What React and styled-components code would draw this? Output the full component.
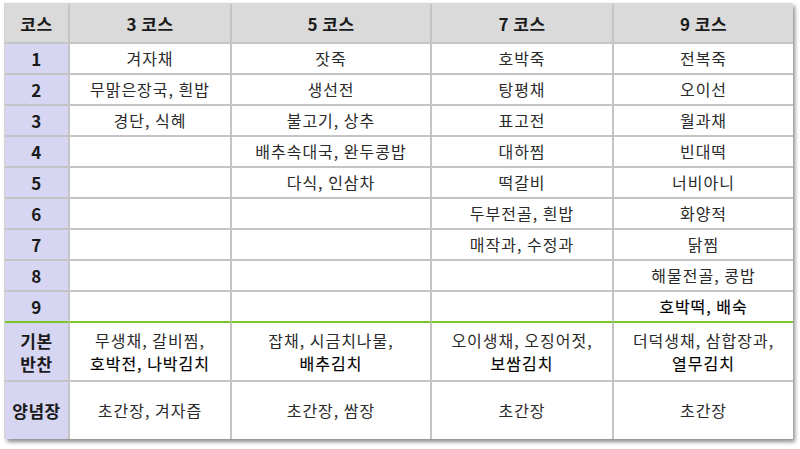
import React from "react";
import styled, { createGlobalStyle } from "styled-components";

const GlobalStyle = createGlobalStyle`
  html, body {
    margin: 0;
    padding: 0;
    background: #ffffff;
  }
  body {
    font-family: "Noto Sans CJK KR", "Noto Sans", sans-serif;
  }
`;

const Page = styled.div`
  width: 800px;
  height: 449px;
  padding: 3px 0 0 4px;
  box-sizing: border-box;
`;

const Grid = styled.div`
  display: grid;
  grid-template-columns: 65px 162px 200px 182px 179px;
  grid-template-rows: 40px repeat(9, 31px) 59px 57px;
  width: 788px;
  box-sizing: border-box;
  background: #ffffff;
  border-top: 1px solid #d4d4d4;
  border-left: 1px solid #d4d4d4;
  box-shadow: 3px 3px 4px rgba(0, 0, 0, 0.45);
`;

const Cell = styled.div`
  display: flex;
  align-items: center;
  justify-content: center;
  text-align: center;
  box-sizing: border-box;
  border-right: ${(p) => (p.$last ? "none" : "2px solid #c4c4c4")};
  border-bottom: ${(p) =>
    p.$green ? "2px solid #7cc62c" : p.$bottom ? "none" : "2px solid #c4c4c4"};
  background: ${(p) =>
    p.$head ? "#dadada" : p.$side ? "#d6d6f2" : "#ffffff"};
  color: #2a2a2a;
  font-size: 16px;
  letter-spacing: 1px;
  line-height: 23px;
  font-weight: 400;
  ${(p) =>
    p.$head || p.$side
      ? "color: #1a1a1a; font-weight: 700; font-size: 17px; letter-spacing: 0.5px;"
      : ""}
`;

const Strong = styled.span`
  color: #000;
  -webkit-text-stroke: 0.15px #000;
`;

const heads = ["코스", "3 코스", "5 코스", "7 코스", "9 코스"];

const rows = [
  ["1", "겨자채", "잣죽", "호박죽", "전복죽"],
  ["2", "무맑은장국, 흰밥", "생선전", "탕평채", "오이선"],
  ["3", "경단, 식혜", "불고기, 상추", "표고전", "월과채"],
  ["4", "", "배추속대국, 완두콩밥", "대하찜", "빈대떡"],
  ["5", "", "다식, 인삼차", "떡갈비", "너비아니"],
  ["6", "", "", "두부전골, 흰밥", "화양적"],
  ["7", "", "", "매작과, 수정과", "닭찜"],
  ["8", "", "", "", "해물전골, 콩밥"],
  ["9", "", "", "", <Strong key="s">호박떡, 배숙</Strong>],
];

const sides = [
  ["무생채, 갈비찜,", "호박전, 나박김치"],
  ["잡채, 시금치나물,", "배추김치"],
  ["오이생채, 오징어젓,", "보쌈김치"],
  ["더덕생채, 삼합장과,", "열무김치"],
];

const sauces = ["초간장, 겨자즙", "초간장, 쌈장", "초간장", "초간장"];

export default function App() {
  return (
    <Page>
      <GlobalStyle />
      <Grid>
        {heads.map((h, i) => (
          <Cell key={"h" + i} $head $last={i === 4}>
            {h}
          </Cell>
        ))}
        {rows.map((r, ri) =>
          r.map((c, ci) => (
            <Cell
              key={ri + "-" + ci}
              $side={ci === 0}
              $last={ci === 4}
              $green={ri === 8}
            >
              {c}
            </Cell>
          ))
        )}
        <Cell $side>
          기본
          <br />
          반찬
        </Cell>
        {sides.map((s, i) => (
          <Cell key={"s" + i} $last={i === 3}>
            <div>
              {s[0]}
              <br />
              <Strong>{s[1]}</Strong>
            </div>
          </Cell>
        ))}
        <Cell $side $bottom>
          양념장
        </Cell>
        {sauces.map((s, i) => (
          <Cell key={"y" + i} $bottom $last={i === 3}>
            {s}
          </Cell>
        ))}
      </Grid>
    </Page>
  );
}
